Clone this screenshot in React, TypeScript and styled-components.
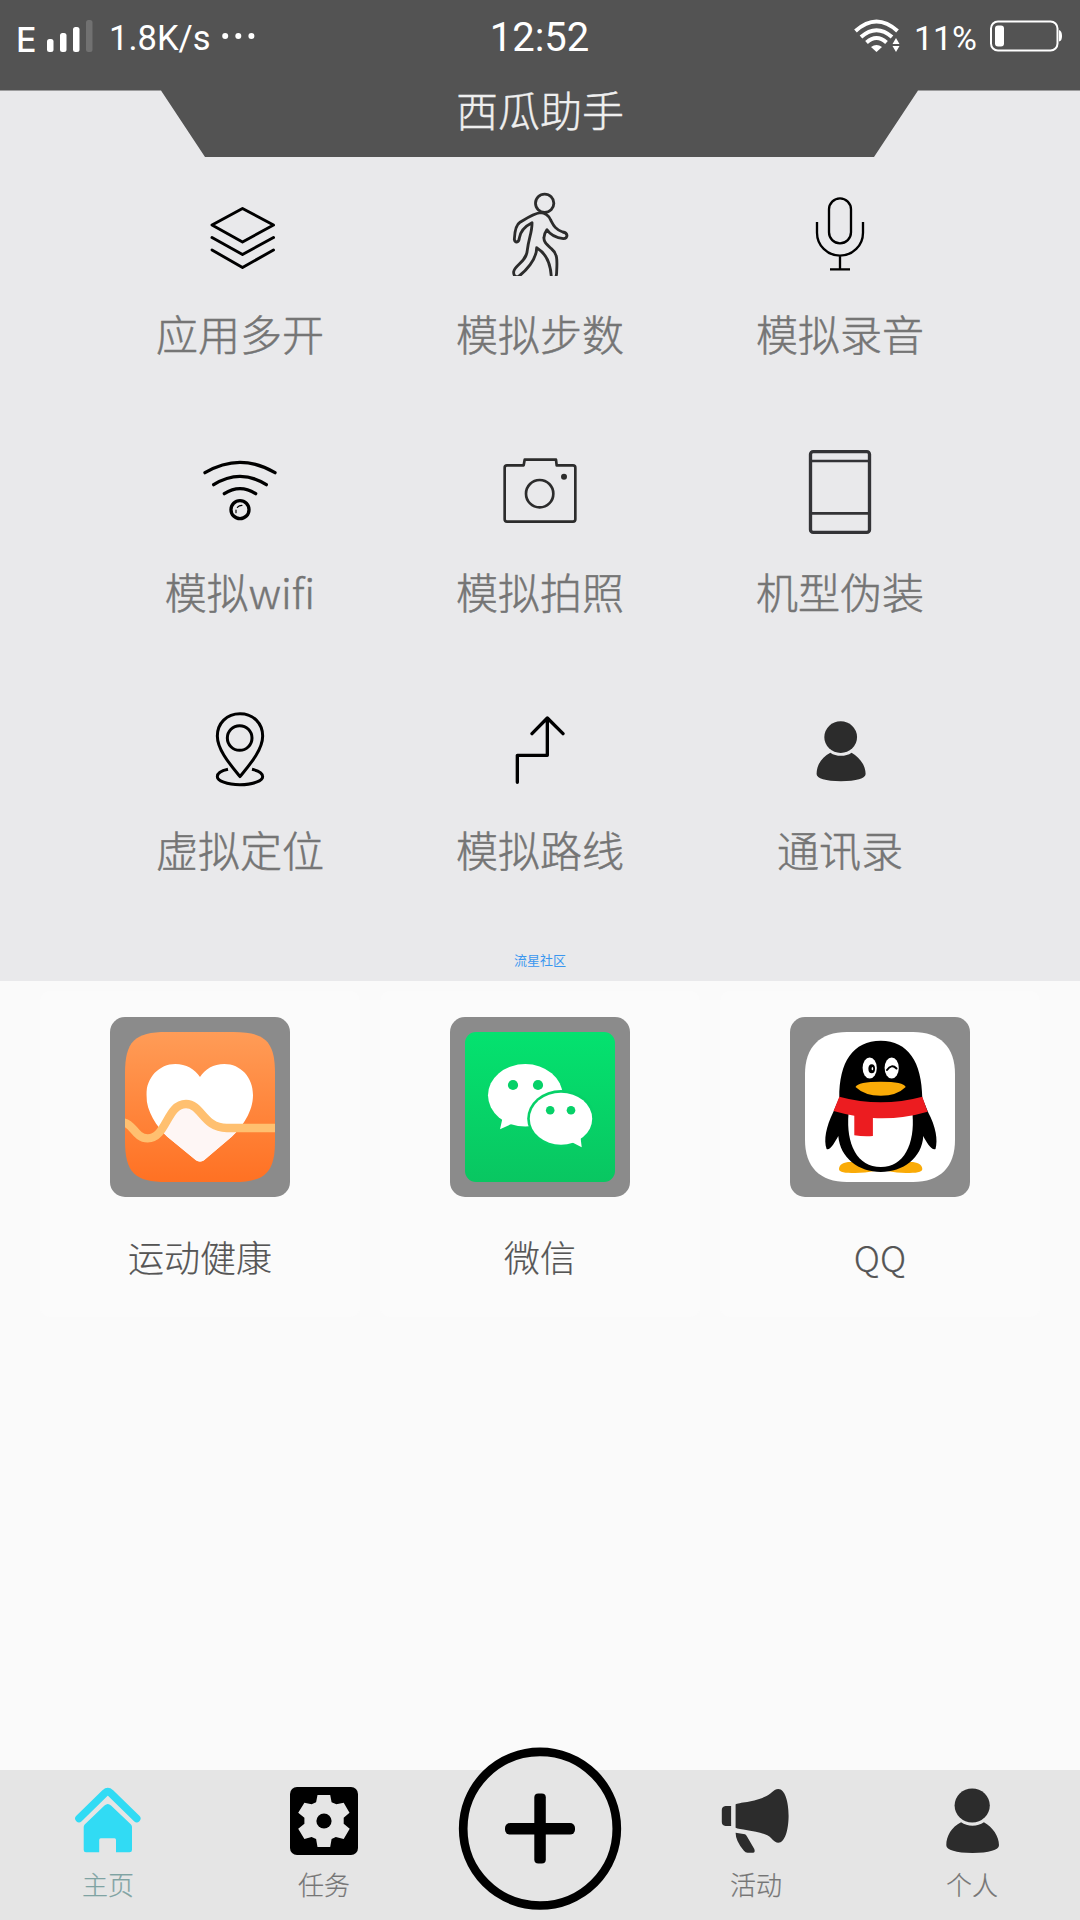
import { FC, ReactNode } from "react";
import styled, { createGlobalStyle, ThemeProvider } from "styled-components";

const theme = {
  color: {
    header: "#535353",
    panel: "#e9e9eb",
    page: "#fafafa",
    card: "#fbfbfb",
    nav: "#e5e5e5",
    label: "#757575",
    appLabel: "#555555",
    active: "#7fa3a3",
    frame: "#8b8b8b",
    link: "#3b97ef",
  },
  font: {
    cjk: `"Noto Sans CJK SC", sans-serif`,
    status: `Roboto, "Noto Sans CJK SC", sans-serif`,
  },
};

const GlobalStyle = createGlobalStyle`
  * {
    box-sizing: border-box;
  }
  body {
    margin: 0;
    font-family: ${theme.font.cjk};
    font-weight: 300;
  }
  svg {
    display: block;
    flex: none;
  }
`;

const Page = styled.div`
  display: flex;
  flex-direction: column;
  width: 1080px;
  height: 1920px;
  background: ${({ theme }) => theme.color.page};
  overflow: hidden;
`;

const Panel = styled.section`
  display: flex;
  flex-direction: column;
  height: 981px;
  background: ${({ theme }) => theme.color.panel};
`;

const Header = styled.header`
  flex: none;
  height: 157px;
  background: ${({ theme }) => theme.color.header};
  clip-path: polygon(
    0 0,
    100% 0,
    100% 90.5px,
    918px 90.5px,
    874px 157px,
    205px 157px,
    161px 90.5px,
    0 90.5px
  );
`;

const StatusBar = styled.div`
  display: grid;
  grid-template-columns: 1fr auto 1fr;
  align-items: center;
  height: 72px;
  padding: 0 17px 0 16px;
  color: #fff;
  font-family: ${({ theme }) => theme.font.status};
  font-weight: 400;
`;

const StatusGroup = styled.div<{ $end?: boolean }>`
  display: flex;
  align-items: center;
  justify-content: ${({ $end }) => ($end ? "flex-end" : "flex-start")};
`;

const StatusText = styled.span`
  padding-top: 3px;
  font-size: 34px;
  line-height: 40px;
`;

const Network = styled(StatusText)`
  width: 31px;
  padding-top: 7px;
  font-family: Inter, sans-serif;
  font-weight: 500;
`;

const Speed = styled(StatusText)`
  margin: 0 11px 0 16px;
  font-size: 34.5px;
`;

const Percent = styled(StatusText)`
  margin: 0 13px 0 14px;
`;

const Clock = styled.span`
  padding-top: 4px;
  font-size: 40px;
  line-height: 48px;
`;

const Title = styled.h1`
  margin: 0;
  color: #efefef;
  font-size: 42px;
  font-weight: 300;
  line-height: 74px;
  text-align: center;
  -webkit-text-stroke: 0.4px;
`;

const FeatureGrid = styled.div`
  display: grid;
  grid-template-columns: repeat(3, 300px);
  row-gap: 85px;
  justify-content: center;
  padding-top: 33px;
`;

const Feature = styled.div`
  display: flex;
  flex-direction: column;
  align-items: center;
`;

const FeatureIcon = styled.div`
  display: flex;
  align-items: center;
  justify-content: center;
  width: 90px;
  height: 90px;
`;

const FeatureLabel = styled.span`
  margin-top: 23px;
  color: ${({ theme }) => theme.color.label};
  font-size: 42px;
  line-height: 60px;
  -webkit-text-stroke: 0.5px;
`;

const Community = styled.a`
  margin: auto auto 12px;
  color: ${({ theme }) => theme.color.link};
  font-size: 13px;
  font-weight: 400;
  line-height: 18px;
`;

const AppList = styled.section`
  display: grid;
  grid-template-columns: repeat(3, 320px);
  gap: 20px;
  justify-content: center;
  padding-top: 10px;
`;

const AppCard = styled.div`
  display: flex;
  flex-direction: column;
  align-items: center;
  height: 326px;
  padding-top: 26px;
  border-radius: 10px;
  background: ${({ theme }) => theme.color.card};
`;

const AppFrame = styled.div`
  padding: 15px;
  border-radius: 15px;
  background: ${({ theme }) => theme.color.frame};
`;

const AppLabel = styled.span`
  margin-top: 33px;
  color: ${({ theme }) => theme.color.appLabel};
  font-size: 36px;
  line-height: 52px;
  -webkit-text-stroke: 0.2px;
`;

const Nav = styled.nav`
  display: grid;
  grid-template-columns: repeat(5, 1fr);
  height: 150px;
  margin-top: auto;
  background: ${({ theme }) => theme.color.nav};
`;

const NavItem = styled.div<{ $active?: boolean }>`
  display: flex;
  flex-direction: column;
  align-items: center;
  padding-top: 15px;
  color: ${({ theme, $active }) =>
    $active ? theme.color.active : theme.color.label};
`;

const NavLabel = styled.span`
  margin-top: 9px;
  font-size: 26px;
  line-height: 36px;
  -webkit-text-stroke: 0.2px;
`;

const AddButton = styled.div`
  justify-self: center;
  width: 164px;
  height: 164px;
  margin-top: -24px;
`;

/* status bar icons */

const SignalIcon = () => (
  <svg width="46" height="34" viewBox="0 0 46 34" fill="#fff">
    <rect x="0" y="20" width="6.5" height="13" rx="2.5" />
    <rect x="13" y="14" width="6.5" height="19" rx="2.5" />
    <rect x="26" y="8" width="6.5" height="25" rx="2.5" />
    <rect x="39" y="1" width="6.5" height="32" rx="2.5" fill="#717171" />
  </svg>
);

const DotsIcon = () => (
  <svg width="33" height="8" viewBox="0 0 33 8" fill="#fff">
    <circle cx="3.2" cy="4" r="3" />
    <circle cx="16.3" cy="4" r="3" />
    <circle cx="29.4" cy="4" r="3" />
  </svg>
);

const StatusWifiIcon = () => (
  <svg width="46" height="34" viewBox="0 0 46 34">
    <g fill="none" stroke="#fff" strokeWidth="4">
      <path d="M1.5 12Q22.5 -7 43.5 12" />
      <path d="M7 18Q22.5 4.5 38 18" />
      <path d="M12.5 23.5Q22.5 14.5 32.5 23.5" />
    </g>
    <path d="M22.5 33L17 28Q22.5 24 28 28Z" fill="#fff" />
    <path d="M38.5 25L42 19L45.5 25ZM38.5 27L42 33L45.5 27Z" fill="#fff" />
  </svg>
);

const BatteryIcon = () => (
  <svg width="73" height="32" viewBox="0 0 73 32">
    <rect
      x="1"
      y="1.5"
      width="66.5"
      height="29"
      rx="7"
      fill="none"
      stroke="#fff"
      strokeWidth="2"
    />
    <rect x="5" y="5.5" width="9" height="21" rx="3" fill="#fff" />
    <path d="M69 10Q72 11 72 16T69 21.5Z" fill="#fff" />
  </svg>
);

/* feature icons */

interface ILineIcon {
  viewBox: string;
  color?: string;
  width?: number;
  children: ReactNode;
}

const LineIcon: FC<ILineIcon> = ({
  viewBox,
  color = "#000",
  width = 9,
  children,
}) => (
  <svg
    width="90"
    height="90"
    viewBox={viewBox}
    fill="none"
    stroke={color}
    strokeWidth={width}
    strokeLinecap="round"
    strokeLinejoin="round"
  >
    {children}
  </svg>
);

const LayersIcon = () => (
  <LineIcon viewBox="0 0 90 90" width={2.9}>
    <path d="M47.5 18.5L17 35L47.5 52L78.5 35Z" />
    <path d="M17 47.5L47.5 64.5L78.5 47.5" />
    <path d="M17 60L47.5 77.5L78.5 60" />
  </LineIcon>
);

const WalkIcon = () => (
  <LineIcon viewBox="165 30 270 270" color="#2c2c2c" width={8.5}>
    <clipPath id="walkClip">
      <rect x="165" y="30" width="270" height="258" />
    </clipPath>
    <g clipPath="url(#walkClip)">
      <circle cx="314" cy="70" r="27.5" />
      <path d="M301 98C280 101 258 116 240 127C228 134 224 155 223 178Q225 187 231 186Q237 184 238 174C241 155 252 140 276 128C277 155 266 175 262 210C260 245 225 255 221 275Q220 292 235 290C255 275 290 240 290 203C310 215 332 240 334 293H345Q350 290 350 275C352 240 352 220 335 207C320 193 310 185 312 172Q313 160 321 149C330 163 350 173 370 176Q381 176 381 166Q380 158 368 156C345 148 340 135 332 120C325 105 315 98 301 98Z" />
    </g>
  </LineIcon>
);

const MicIcon = () => (
  <LineIcon viewBox="1065 30 270 270" width={7}>
    <rect x="1167" y="55" width="66" height="135" rx="33" />
    <path
      d="M1131 126V158A69 69 0 0 0 1269 158V126M1200 227V268M1170 268H1230"
      strokeLinecap="butt"
    />
  </LineIcon>
);

const WifiIcon = () => (
  <LineIcon viewBox="165 54 270 270" width={10}>
    <path d="M195 128Q300 66 405 128" />
    <path d="M221 164Q300 114 379 164" />
    <path d="M253 191Q300 161 347 191" />
    <circle cx="300" cy="239" r="27" />
    <path d="M288 248V240M292 232Q297 226 306 226" strokeWidth="3.5" />
  </LineIcon>
);

const CameraIcon = () => (
  <LineIcon viewBox="1065 54 270 270" color="#2c2c2c" width={8}>
    <path d="M1151 106L1154 89H1248L1250 106H1299Q1306 106 1306 113V268Q1306 275 1299 275H1101Q1094 275 1094 268V113Q1094 106 1101 106Z" />
    <circle cx="1199" cy="191" r="41" />
    <circle cx="1272" cy="140" r="9" fill="#2c2c2c" stroke="none" />
  </LineIcon>
);

const PhoneIcon = () => (
  <LineIcon viewBox="465 54 270 270" color="#333336" width={10}>
    <rect x="511.5" y="65" width="177" height="242" rx="8" />
    <path d="M512 93H689M512 250H689" strokeWidth="8" />
  </LineIcon>
);

const PinIcon = () => (
  <LineIcon viewBox="165 48 270 270">
    <path d="M300 71C260 71 232 100 232 138C232 180 272 225 300 260C328 225 368 180 368 138C368 100 340 71 300 71Z" />
    <circle cx="299" cy="144" r="37" />
    <path
      d="M264 238C240 243 232 250 232 260C232 272 260 284 300 284C340 284 368 272 368 260C368 250 358 243 336 238"
      strokeLinecap="butt"
    />
  </LineIcon>
);

const RouteIcon = () => (
  <LineIcon viewBox="1065 48 270 270" width={10}>
    <path d="M1132 277V196H1222V86M1176 131L1222 84L1269 131" />
  </LineIcon>
);

const PersonIcon: FC<{ size?: number }> = ({ size = 72 }) => (
  <svg width={size} height={size} viewBox="0 0 72 72" fill="#2c2c2c">
    <ellipse cx="36.2" cy="20.5" rx="17.6" ry="17" />
    <path d="M25.1 37.3C15.5 42 10.3 51 10.3 60.3C10.3 65 20 68 36.5 68C53 68 63 65 63 60.3C63 51 56.5 42 47.9 37.3Q43 40.7 36.5 40.7Q30 40.7 25.1 37.3Z" />
  </svg>
);

/* app logos */

const HealthLogo = () => (
  <svg width="150" height="150" viewBox="135 186 450 450">
    <defs>
      <linearGradient id="healthBg" x1="0" y1="0" x2="0" y2="1">
        <stop offset="0" stopColor="#ff9c57" />
        <stop offset="1" stopColor="#ff7123" />
      </linearGradient>
      <clipPath id="healthClip">
        <path d="M135 310C135 215 164 186 260 186H460C556 186 585 215 585 310V512C585 607 556 636 460 636H260C164 636 135 607 135 512Z" />
      </clipPath>
      <clipPath id="heartClip">
        <path d="M360 321C375 298 400 282 433 282C482 282 519 322 519 375C519 425 487 470 455 500L372 571Q360 579 348 571L262 500C230 470 199 425 199 375C199 322 238 282 286 282C318 282 345 298 360 321Z" />
      </clipPath>
    </defs>
    <g clipPath="url(#healthClip)">
      <rect x="135" y="186" width="450" height="450" fill="url(#healthBg)" />
      <g clipPath="url(#heartClip)">
        <rect x="190" y="270" width="340" height="320" fill="#fff" />
        <path
          d="M203 505C260 505 260 402 318 402C365 402 370 474 440 474H585V600H203Z"
          fill="#fef6f5"
        />
      </g>
      <path
        d="M130 457C160 460 165 505 203 505C260 505 260 402 318 402C365 402 370 474 440 474H590"
        fill="none"
        stroke="#ffc070"
        strokeWidth="25"
      />
    </g>
  </svg>
);

const WechatLogo = () => (
  <svg width="150" height="150" viewBox="0 0 150 150">
    <defs>
      <linearGradient id="wechatBg" x1="0" y1="0" x2="0" y2="1">
        <stop offset="0" stopColor="#04e26f" />
        <stop offset="1" stopColor="#09c661" />
      </linearGradient>
    </defs>
    <rect width="150" height="150" rx="11" fill="url(#wechatBg)" />
    <g fill="#fff">
      <ellipse cx="60.3" cy="63.3" rx="37.3" ry="31.3" />
      <path d="M38 84L35 97.3L47.5 91.5L56 92Z" />
    </g>
    <ellipse cx="96" cy="86.7" rx="33.8" ry="28.7" fill="#06d168" />
    <g fill="#fff">
      <ellipse cx="96" cy="86.7" rx="31.2" ry="26" />
      <path d="M115.5 105L116.7 115.3L107 110.3Z" />
    </g>
    <g fill="#06d168">
      <circle cx="48" cy="53" r="5.1" />
      <circle cx="73" cy="53" r="5.1" />
      <circle cx="85.2" cy="78.3" r="4.3" />
      <circle cx="106" cy="78.3" r="4.3" />
    </g>
  </svg>
);

const QQLogo = () => (
  <svg width="150" height="150" viewBox="0 0 150 150">
    <path
      d="M0 42C0 15 15 0 42 0H108C135 0 150 15 150 42V108C150 135 135 150 108 150H42C15 150 0 135 0 108Z"
      fill="#fff"
    />
    <g fill="#faab07">
      <path d="M34 137C34 132 40 129.5 47 130L70 139Q60 141 50 141C40 141 34 140.5 34 137Z" />
      <path d="M117.3 137C117.3 132 111 129.5 104 130L82 139Q92 141 101 141C111 141 117.3 140.5 117.3 137Z" />
    </g>
    <path d="M34.3 66C34 30 48 8.7 75.8 8.7C103 8.7 117 30 117.3 66L123 80C131 95 133 108 130.5 117C127 119 121 110 118.3 104C117 126 98 140 75.8 140C54 140 35 126 33.3 104C30 110 25 119 21.6 117C18.5 108 21 95 28.3 80Z" />
    <path
      d="M43.5 82C41 112 52 135 75.8 135C99 135 110 112 107.5 82Z"
      fill="#fff"
    />
    <path
      d="M34.3 64.7Q75.8 76 117.3 64.7L122.6 79.7Q96 87.5 67.9 86V104Q58 104.6 49.3 103.3V83.7Q39 82 28.6 79Z"
      fill="#ec1c20"
    />
    <path
      d="M50.5 55Q53 49.7 75.8 49.7T100.7 55Q92 63.7 75.8 63.7T50.5 55Z"
      fill="#faab07"
    />
    <g fill="#fff">
      <ellipse cx="64.7" cy="36" rx="7.1" ry="10.6" />
      <ellipse cx="86.7" cy="36" rx="7.1" ry="10.6" />
    </g>
    <ellipse cx="66.7" cy="36.7" rx="3.3" ry="4.5" />
    <ellipse cx="67.4" cy="36.7" rx="0.8" ry="1.6" fill="#fff" />
    <path
      d="M82 38Q86.5 31.5 91.5 36.5"
      fill="none"
      stroke="#000"
      strokeWidth="2"
      strokeLinecap="round"
    />
  </svg>
);

/* bottom navigation icons */

const HomeIcon = () => (
  <svg width="72" height="72" viewBox="0 0 72 72" fill="#31dbf4">
    <path
      d="M7 33.5L33 8Q35.8 5.5 38.6 8L64.7 33.5"
      fill="none"
      stroke="#31dbf4"
      strokeWidth="7.6"
      strokeLinecap="round"
    />
    <path d="M32.5 20.5Q35.8 17.5 39 20.5L59 39.5Q60 40.5 60 42V65Q60 67.3 57.5 67.3H44V55Q44 53.3 42.5 53.3H28.8Q27.2 53.3 27.2 55V67.3H14Q11.7 67.3 11.7 65V42Q11.7 40.5 12.7 39.5Z" />
  </svg>
);

const TaskIcon = () => (
  <svg width="72" height="72" viewBox="0 0 72 72">
    <rect x="2" y="2" width="68" height="68" rx="7" />
    <path
      d="M29.5 10H42.2L43.6 17.3L48.4 19.3L55.7 17.7L61.5 27.7L55.7 32.7V38.7L61.7 43.7L55.7 54L47.8 52L43.6 54L42.2 62H29.5L28.1 54L23.6 52L16.4 54L10.2 43.7L16.4 38.7V32.7L10.2 27.7L16.4 17.7L23.6 19.3L28.1 17.3Z"
      fill="#e5e5e5"
    />
    <circle cx="36" cy="36" r="7.6" />
  </svg>
);

const MegaphoneIcon = () => (
  <svg width="72" height="72" viewBox="0 0 72 72" fill="#2c2c2c">
    <path d="M5.5 21H11.1V41H5.5Q1.8 40.5 1.8 37V25Q1.8 21.5 5.5 21Z" />
    <path d="M15.6 19.7C16 17 38 18 50.7 8.3Q55 4 58.3 4C65 4 68.6 17 68.6 30.7S65 57.7 58.3 57.7Q55 57.7 51 53C45 46 20 45 15.6 42.7Z" />
    <path d="M15.6 47.7L25 49.3Q26 49.5 27 51.5L34.3 64Q35.5 67.7 33 67.7H27.6Q25.5 67.7 23.9 65.7Q15.6 56 15.6 47.7Z" />
  </svg>
);

const AddIcon = () => (
  <svg width="164" height="164" viewBox="0 0 164 164">
    <circle
      cx="82"
      cy="82.7"
      r="76.8"
      fill="#e5e5e5"
      stroke="#000"
      strokeWidth="8.7"
    />
    <rect x="47" y="77" width="70" height="11.6" rx="5" />
    <rect x="76.3" y="47.5" width="11.5" height="70" rx="4" />
  </svg>
);

const features = [
  { label: "应用多开", icon: <LayersIcon /> },
  { label: "模拟步数", icon: <WalkIcon /> },
  { label: "模拟录音", icon: <MicIcon /> },
  { label: "模拟wifi", icon: <WifiIcon /> },
  { label: "模拟拍照", icon: <CameraIcon /> },
  { label: "机型伪装", icon: <PhoneIcon /> },
  { label: "虚拟定位", icon: <PinIcon /> },
  { label: "模拟路线", icon: <RouteIcon /> },
  { label: "通讯录", icon: <PersonIcon size={67} /> },
];

const apps = [
  { label: "运动健康", logo: <HealthLogo /> },
  { label: "微信", logo: <WechatLogo /> },
  { label: "QQ", logo: <QQLogo /> },
];

export default function App() {
  return (
    <ThemeProvider theme={theme}>
      <GlobalStyle />
      <Page>
        <Panel>
          <Header>
            <StatusBar>
              <StatusGroup>
                <Network>E</Network>
                <SignalIcon />
                <Speed>1.8K/s</Speed>
                <DotsIcon />
              </StatusGroup>
              <Clock>12:52</Clock>
              <StatusGroup $end>
                <StatusWifiIcon />
                <Percent>11%</Percent>
                <BatteryIcon />
              </StatusGroup>
            </StatusBar>
            <Title>西瓜助手</Title>
          </Header>
          <FeatureGrid>
            {features.map(({ label, icon }) => (
              <Feature key={label}>
                <FeatureIcon>{icon}</FeatureIcon>
                <FeatureLabel>{label}</FeatureLabel>
              </Feature>
            ))}
          </FeatureGrid>
          <Community>流星社区</Community>
        </Panel>
        <AppList>
          {apps.map(({ label, logo }) => (
            <AppCard key={label}>
              <AppFrame>{logo}</AppFrame>
              <AppLabel>{label}</AppLabel>
            </AppCard>
          ))}
        </AppList>
        <Nav>
          <NavItem $active>
            <HomeIcon />
            <NavLabel>主页</NavLabel>
          </NavItem>
          <NavItem>
            <TaskIcon />
            <NavLabel>任务</NavLabel>
          </NavItem>
          <AddButton>
            <AddIcon />
          </AddButton>
          <NavItem>
            <MegaphoneIcon />
            <NavLabel>活动</NavLabel>
          </NavItem>
          <NavItem>
            <PersonIcon />
            <NavLabel>个人</NavLabel>
          </NavItem>
        </Nav>
      </Page>
    </ThemeProvider>
  );
}
